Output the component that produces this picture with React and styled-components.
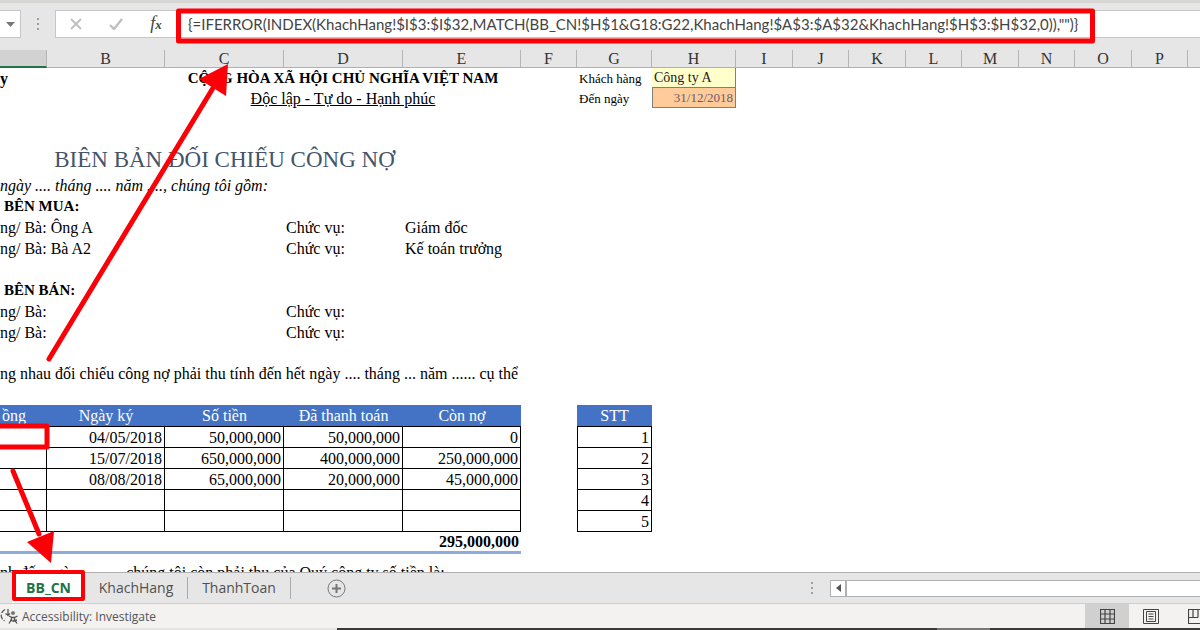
import React from 'react';
import styled, { createGlobalStyle } from 'styled-components';

const GlobalStyle = createGlobalStyle`
    * {
        box-sizing: border-box;
    }
    body {
        margin: 0;
        background-color: #ffffff;
        overflow: hidden;
    }
    button, input {
        font: inherit;
        color: inherit;
        border: 0;
        padding: 0;
        background: none;
    }
`;

const Window = styled.div`
    position: relative;
    display: flex;
    flex-direction: column;
    height: 100vh;
    overflow: hidden;
    color: #1a1a1a;
    font-family: "Open Sans", "Noto Sans", sans-serif;
`;

const FormulaBar = styled.div`
    display: flex;
    flex-shrink: 0;
    background-color: #e6e6e6;
    border-top: 3px solid #d6d6d4;
    padding: 7px 0 12px;
`;

const NameBox = styled.button`
    width: 21px;
    height: 28px;
    display: flex;
    align-items: center;
    justify-content: center;
    background-color: #ffffff;
    border: 1px solid #c6c6c6;
    border-left: 0;
`;

const Grip = styled.div`
    display: flex;
    flex-direction: column;
    align-items: center;
    justify-content: center;
    gap: 3px;
    width: ${props => props.$width};
    span {
        width: 2px;
        height: 2px;
        background-color: #a0a0a0;
    }
`;

const FormulaBox = styled.div`
    flex: 1;
    display: flex;
    height: 28px;
    background-color: #ffffff;
    border: 1px solid #c6c6c6;
    border-right: 0;
`;

const FormulaButton = styled.button`
    width: 40px;
    display: flex;
    align-items: center;
    justify-content: center;
    color: #c0c0c0;
`;

const Fx = styled.span`
    font: italic 18px/20px "Liberation Serif", serif;
    color: #444444;
    small {
        font-size: 13px;
        font-weight: bold;
    }
`;

const FormulaInput = styled.input`
    flex: 1;
    min-width: 0;
    padding-left: 12px;
    font-family: Lato, "Open Sans", sans-serif;
    font-size: 15px;
    color: #444444;
    outline: none;
`;

const Sheet = styled.main`
    flex: 1;
    min-height: 0;
    overflow: hidden;
`;

const Grid = styled.table`
    table-layout: fixed;
    width: 0;
    border-collapse: separate;
    border-spacing: 0;
    font-family: "Liberation Serif", serif;
    font-size: 16px;
    line-height: 19px;
    color: #000000;
`;

const Letter = styled.th`
    height: 18px;
    padding: 0;
    font-weight: normal;
    line-height: 16px;
    color: #333333;
    background-color: ${props => (props.$active ? '#d2d2d2' : '#e6e6e6')};
    border-right: 1px solid #b5b5b5;
    border-bottom: ${props => (props.$active ? '2px solid #217346' : '1px solid #b0b0b0')};
`;

const Row = styled.tr`
    height: ${props => props.$height || 21}px;
`;

const Cell = styled.td`
    padding: 0 2px;
    white-space: nowrap;
    text-align: ${props => props.$align || 'left'};
    font-size: ${props => props.$size || 16}px;
    font-weight: ${props => (props.$bold ? 'bold' : 'normal')};
    font-style: ${props => (props.$italic ? 'italic' : 'normal')};
    text-decoration: ${props => (props.$underline ? 'underline' : 'none')};
`;

const CutCell = styled(Cell)`
    padding-left: ${props => props.$indent || 0}px;
`;

const Title = styled(Cell)`
    padding-right: 74px;
    font-size: 23px;
    line-height: 28px;
    color: #44546a;
`;

const Party = styled(Cell)`
    background-color: ${props => props.$fill};
    border: 1px solid #7f7f7f;
    border-top: 0;
    border-left: ${props => (props.$boxed ? '1px solid #7f7f7f' : 0)};
    color: ${props => props.$color};
`;

const HeadCell = styled(Cell)`
    background-color: #4472c4;
    border-bottom: 1px solid #000000;
    color: #ffffff;
`;

const BoxCell = styled(Cell)`
    border-right: 1px solid #000000;
    border-bottom: 1px solid #000000;
    border-left: ${props => (props.$first ? '1px solid #000000' : 0)};
`;

const TotalCell = styled(Cell)`
    border-bottom: 3px solid #8faadc;
`;

const TabBar = styled.div`
    display: flex;
    flex-shrink: 0;
    align-items: center;
    height: 32px;
    background-color: #e6e6e6;
    border-top: 1px solid #b0b0b0;
    border-bottom: 1px solid #cfcfcf;
    font-size: 14px;
    line-height: 20px;
    color: #505050;
`;

const Tab = styled.button`
    height: 22px;
    width: ${props => props.$width}px;
    text-align: center;
    border-right: 1px solid #ababab;
`;

const ActiveTab = styled(Tab)`
    height: 30px;
    margin-left: 12px;
    background-color: #ffffff;
    border-right: 0;
    font-weight: bold;
    color: #217346;
`;

const AddSheet = styled.button`
    display: flex;
    margin-left: 36px;
    color: #777777;
`;

const ScrollBar = styled.div`
    display: flex;
    width: 370px;
    height: 17px;
    border: 1px solid #b0b0b0;
    border-right: 0;
    background-color: #ffffff;
`;

const ScrollButton = styled.button`
    width: 16px;
    display: flex;
    align-items: center;
    justify-content: center;
    border-right: 2px solid #b0b0b0;
`;

const Spacer = styled.div`
    flex: 1;
`;

const StatusBar = styled.footer`
    display: flex;
    flex-shrink: 0;
    align-items: center;
    height: 24px;
    background-color: #f3f2f1;
    font-size: 12px;
    color: #555555;
`;

const Accessibility = styled.button`
    display: flex;
    align-items: center;
    gap: 4px;
`;

const ViewButton = styled.button`
    width: ${props => props.$width || 44}px;
    height: 24px;
    display: flex;
    align-items: center;
    justify-content: ${props => props.$justify || 'center'};
    background-color: ${props => (props.$active ? '#d0d0d0' : 'transparent')};
`;

const Taskbar = styled.div`
    display: flex;
    flex-shrink: 0;
    height: 2px;
    background-color: #3d3b3a;
`;

const TaskbarPart = styled.div`
    width: ${props => props.$width}px;
    background-color: ${props => props.$color};
`;

const Marks = styled.svg`
    position: absolute;
    top: 0;
    left: 0;
    pointer-events: none;
`;

const columns = [
    ['A', 47], ['B', 118], ['C', 119], ['D', 119], ['E', 118], ['F', 56],
    ['G', 75], ['H', 84], ['I', 57], ['J', 56], ['K', 57], ['L', 56],
    ['M', 57], ['N', 56], ['O', 57], ['P', 56], ['', 57],
];

const debts = [
    ['04/05/2018', '50,000,000', '50,000,000', '0'],
    ['15/07/2018', '650,000,000', '400,000,000', '250,000,000'],
    ['08/08/2018', '65,000,000', '20,000,000', '45,000,000'],
    ['', '', '', ''],
    ['', '', '', ''],
];

const formula = '{=IFERROR(INDEX(KhachHang!$I$3:$I$32,MATCH(BB_CN!$H$1&G18:G22,KhachHang!$A$3:$A$32&KhachHang!$H$3:$H$32,0)),"")}';

const Person = ({ name, role }) => (
    <Row>
        <CutCell colSpan={3}>ng/ Bà: {name}</CutCell>
        <Cell>Chức vụ:</Cell>
        <Cell>{role}</Cell>
    </Row>
);

const Dots = ({ width }) => (
    <Grip $width={width}><span /><span /><span /></Grip>
);

const Toolbar = () => (
    <FormulaBar>
        <NameBox aria-label="Name box">
            <svg width="9" height="5"><path d="M0 0h9L4.5 5z" fill="#777777" /></svg>
        </NameBox>
        <Dots width="34px" />
        <FormulaBox>
            <FormulaButton aria-label="Cancel">
                <svg width="12" height="12"><path d="M1 1l10 10M11 1L1 11" stroke="currentColor" strokeWidth="2" /></svg>
            </FormulaButton>
            <FormulaButton aria-label="Enter">
                <svg width="14" height="12"><path d="M1 7l4 4l8-10" fill="none" stroke="currentColor" strokeWidth="2.4" /></svg>
            </FormulaButton>
            <FormulaButton aria-label="Insert function"><Fx>f<small>x</small></Fx></FormulaButton>
            <FormulaInput aria-label="Formula" value={formula} readOnly />
        </FormulaBox>
    </FormulaBar>
);

const Worksheet = () => (
    <Sheet>
        <Grid>
            <colgroup>
                {columns.map(([name, width]) => <col key={name} style={{ width }} />)}
            </colgroup>
            <thead>
                <tr>
                    {columns.map(([name]) => (
                        <Letter key={name} $active={name === 'A'}>{name === 'A' ? '' : name}</Letter>
                    ))}
                </tr>
            </thead>
            <tbody>
                <Row $height={20}>
                    <CutCell $bold>y</CutCell>
                    <Cell />
                    <Cell colSpan={3} $align="center" $size={15} $bold>CỘNG HÒA XÃ HỘI CHỦ NGHĨA VIỆT NAM</Cell>
                    <Cell />
                    <Cell $size={13}>Khách hàng</Cell>
                    <Party $size={14} $fill="#ffffcc" $color="#222222">Công ty A</Party>
                </Row>
                <Row $height={20}>
                    <Cell colSpan={2} />
                    <Cell colSpan={3} $align="center" $underline>Độc lập - Tự do - Hạnh phúc</Cell>
                    <Cell />
                    <Cell $size={13}>Đến ngày</Cell>
                    <Party $size={13} $align="right" $fill="#ffcc99" $color="#6b5a72" $boxed>31/12/2018</Party>
                </Row>
                <Row $height={37}><Cell colSpan={5} /></Row>
                <Row $height={30}>
                    <Title colSpan={5} $align="center">BIÊN BẢN ĐỐI CHIẾU CÔNG NỢ</Title>
                </Row>
                <Row><CutCell colSpan={5} $italic>ngày .... tháng .... năm ...., chúng tôi gồm:</CutCell></Row>
                <Row><CutCell colSpan={5} $size={15} $bold $indent={4}>BÊN MUA:</CutCell></Row>
                <Person name="Ông A" role="Giám đốc" />
                <Person name="Bà A2" role="Kế toán trưởng" />
                <Row><Cell colSpan={5} /></Row>
                <Row><CutCell colSpan={5} $size={15} $bold $indent={4}>BÊN BÁN:</CutCell></Row>
                <Person />
                <Person />
                <Row $height={20}><Cell colSpan={5} /></Row>
                <Row>
                    <CutCell colSpan={5}>ng nhau đối chiếu công nợ phải thu tính đến hết ngày .... tháng ... năm ...... cụ thể</CutCell>
                </Row>
                <Row><Cell colSpan={5} /></Row>
                <Row $height={22}>
                    <HeadCell>ồng</HeadCell>
                    <HeadCell $align="center">Ngày ký</HeadCell>
                    <HeadCell $align="center">Số tiền</HeadCell>
                    <HeadCell $align="center">Đã thanh toán</HeadCell>
                    <HeadCell $align="center">Còn nợ</HeadCell>
                    <Cell />
                    <HeadCell $align="center">STT</HeadCell>
                </Row>
                {debts.map((values, index) => (
                    <Row key={index}>
                        <BoxCell />
                        {values.map((value, i) => <BoxCell key={i} $align="right">{value}</BoxCell>)}
                        <Cell />
                        <BoxCell $align="right" $first>{index + 1}</BoxCell>
                    </Row>
                ))}
                <Row $height={22}>
                    <TotalCell colSpan={5} $align="right" $bold>295,000,000</TotalCell>
                </Row>
                <Row $height={36}>
                    <CutCell colSpan={5}>nh đến ngày .......... chúng tôi còn phải thu của Quý công ty số tiền là:</CutCell>
                </Row>
            </tbody>
        </Grid>
    </Sheet>
);

const Tabs = () => (
    <TabBar>
        <ActiveTab $width={73}>BB_CN</ActiveTab>
        <Tab $width={103}>KhachHang</Tab>
        <Tab $width={103}>ThanhToan</Tab>
        <AddSheet aria-label="New sheet">
            <svg width="19" height="19" fill="none" stroke="currentColor">
                <circle cx="9.5" cy="9.5" r="8.5" />
                <path d="M9.5 5v9M5 9.5h9" strokeWidth="2" />
            </svg>
        </AddSheet>
        <Spacer />
        <Dots width="36px" />
        <ScrollBar>
            <ScrollButton aria-label="Scroll left">
                <svg width="5" height="8"><path d="M5 0v8L0 4z" fill="#555555" /></svg>
            </ScrollButton>
        </ScrollBar>
    </TabBar>
);

const Status = () => (
    <StatusBar>
        <Accessibility>
            <svg width="18" height="16" fill="none" stroke="#555555" strokeWidth="1.3">
                <path d="M5 1.5C0 4 0 10 4.500 13" strokeDasharray="5 1.500" />
                <path d="M8 1v6M5.500 5.500L8 7.500L10 5.500" />
                <circle cx="13" cy="5" r="1.200" />
                <path d="M9 8l3 1.500h2.500L17.500 8M11.500 9.500v2L9 15.500M14.500 9.500v2l2.500 4M10 12l3 1l4-1" />
            </svg>
            Accessibility: Investigate
        </Accessibility>
        <Spacer />
        <ViewButton aria-label="Normal view" $active>
            <svg width="15" height="15" fill="none" stroke="#444444">
                <path d="M.5.5h14v14H.5zM5 .5v14M10 .5v14M.5 5h14M.5 10h14" strokeWidth="1.2" />
            </svg>
        </ViewButton>
        <ViewButton aria-label="Page layout">
            <svg width="16" height="15" fill="none" stroke="#444444">
                <path d="M.5.5h15v14H.5zM3.500 2.500h9v10h-9zM5.500 5h5M5.500 7.500h5M5.500 10h5" />
            </svg>
        </ViewButton>
        <ViewButton aria-label="Page break preview" $width={27} $justify="flex-end">
            <svg width="12" height="15" fill="none" stroke="#444444" strokeWidth="1.2">
                <path d="M12 .5H.5v14H12M.5 8.500H10M5 .5v8M10 .5v8" />
            </svg>
        </ViewButton>
    </StatusBar>
);

const Annotations = () => (
    <Marks width="1200" height="630" fill="none" stroke="#fb0007" strokeWidth="5" strokeLinejoin="round" strokeLinecap="round">
        <rect x="178.500" y="11" width="914" height="30" />
        <path d="M-10 426H47v21H-10" />
        <rect x="14" y="572" width="69" height="27" strokeWidth="4" />
        <path d="M49 359L213 88M13 471l26 63" />
        <path d="M228 64L199 79L226 96zM27 542L54 531L51 563z" fill="#fb0007" stroke="none" />
    </Marks>
);

const App = () => {
    return (
        <React.Fragment>
            <GlobalStyle />
            <Window>
                <Toolbar />
                <Worksheet />
                <Tabs />
                <Status />
                <Taskbar>
                    <TaskbarPart $width={337} $color="#e4e4e4" />
                    <TaskbarPart $width={600} $color="#3d3b3a" />
                    <TaskbarPart $width={53} $color="#777777" />
                </Taskbar>
                <Annotations />
            </Window>
        </React.Fragment>
    )
}

export default App;
